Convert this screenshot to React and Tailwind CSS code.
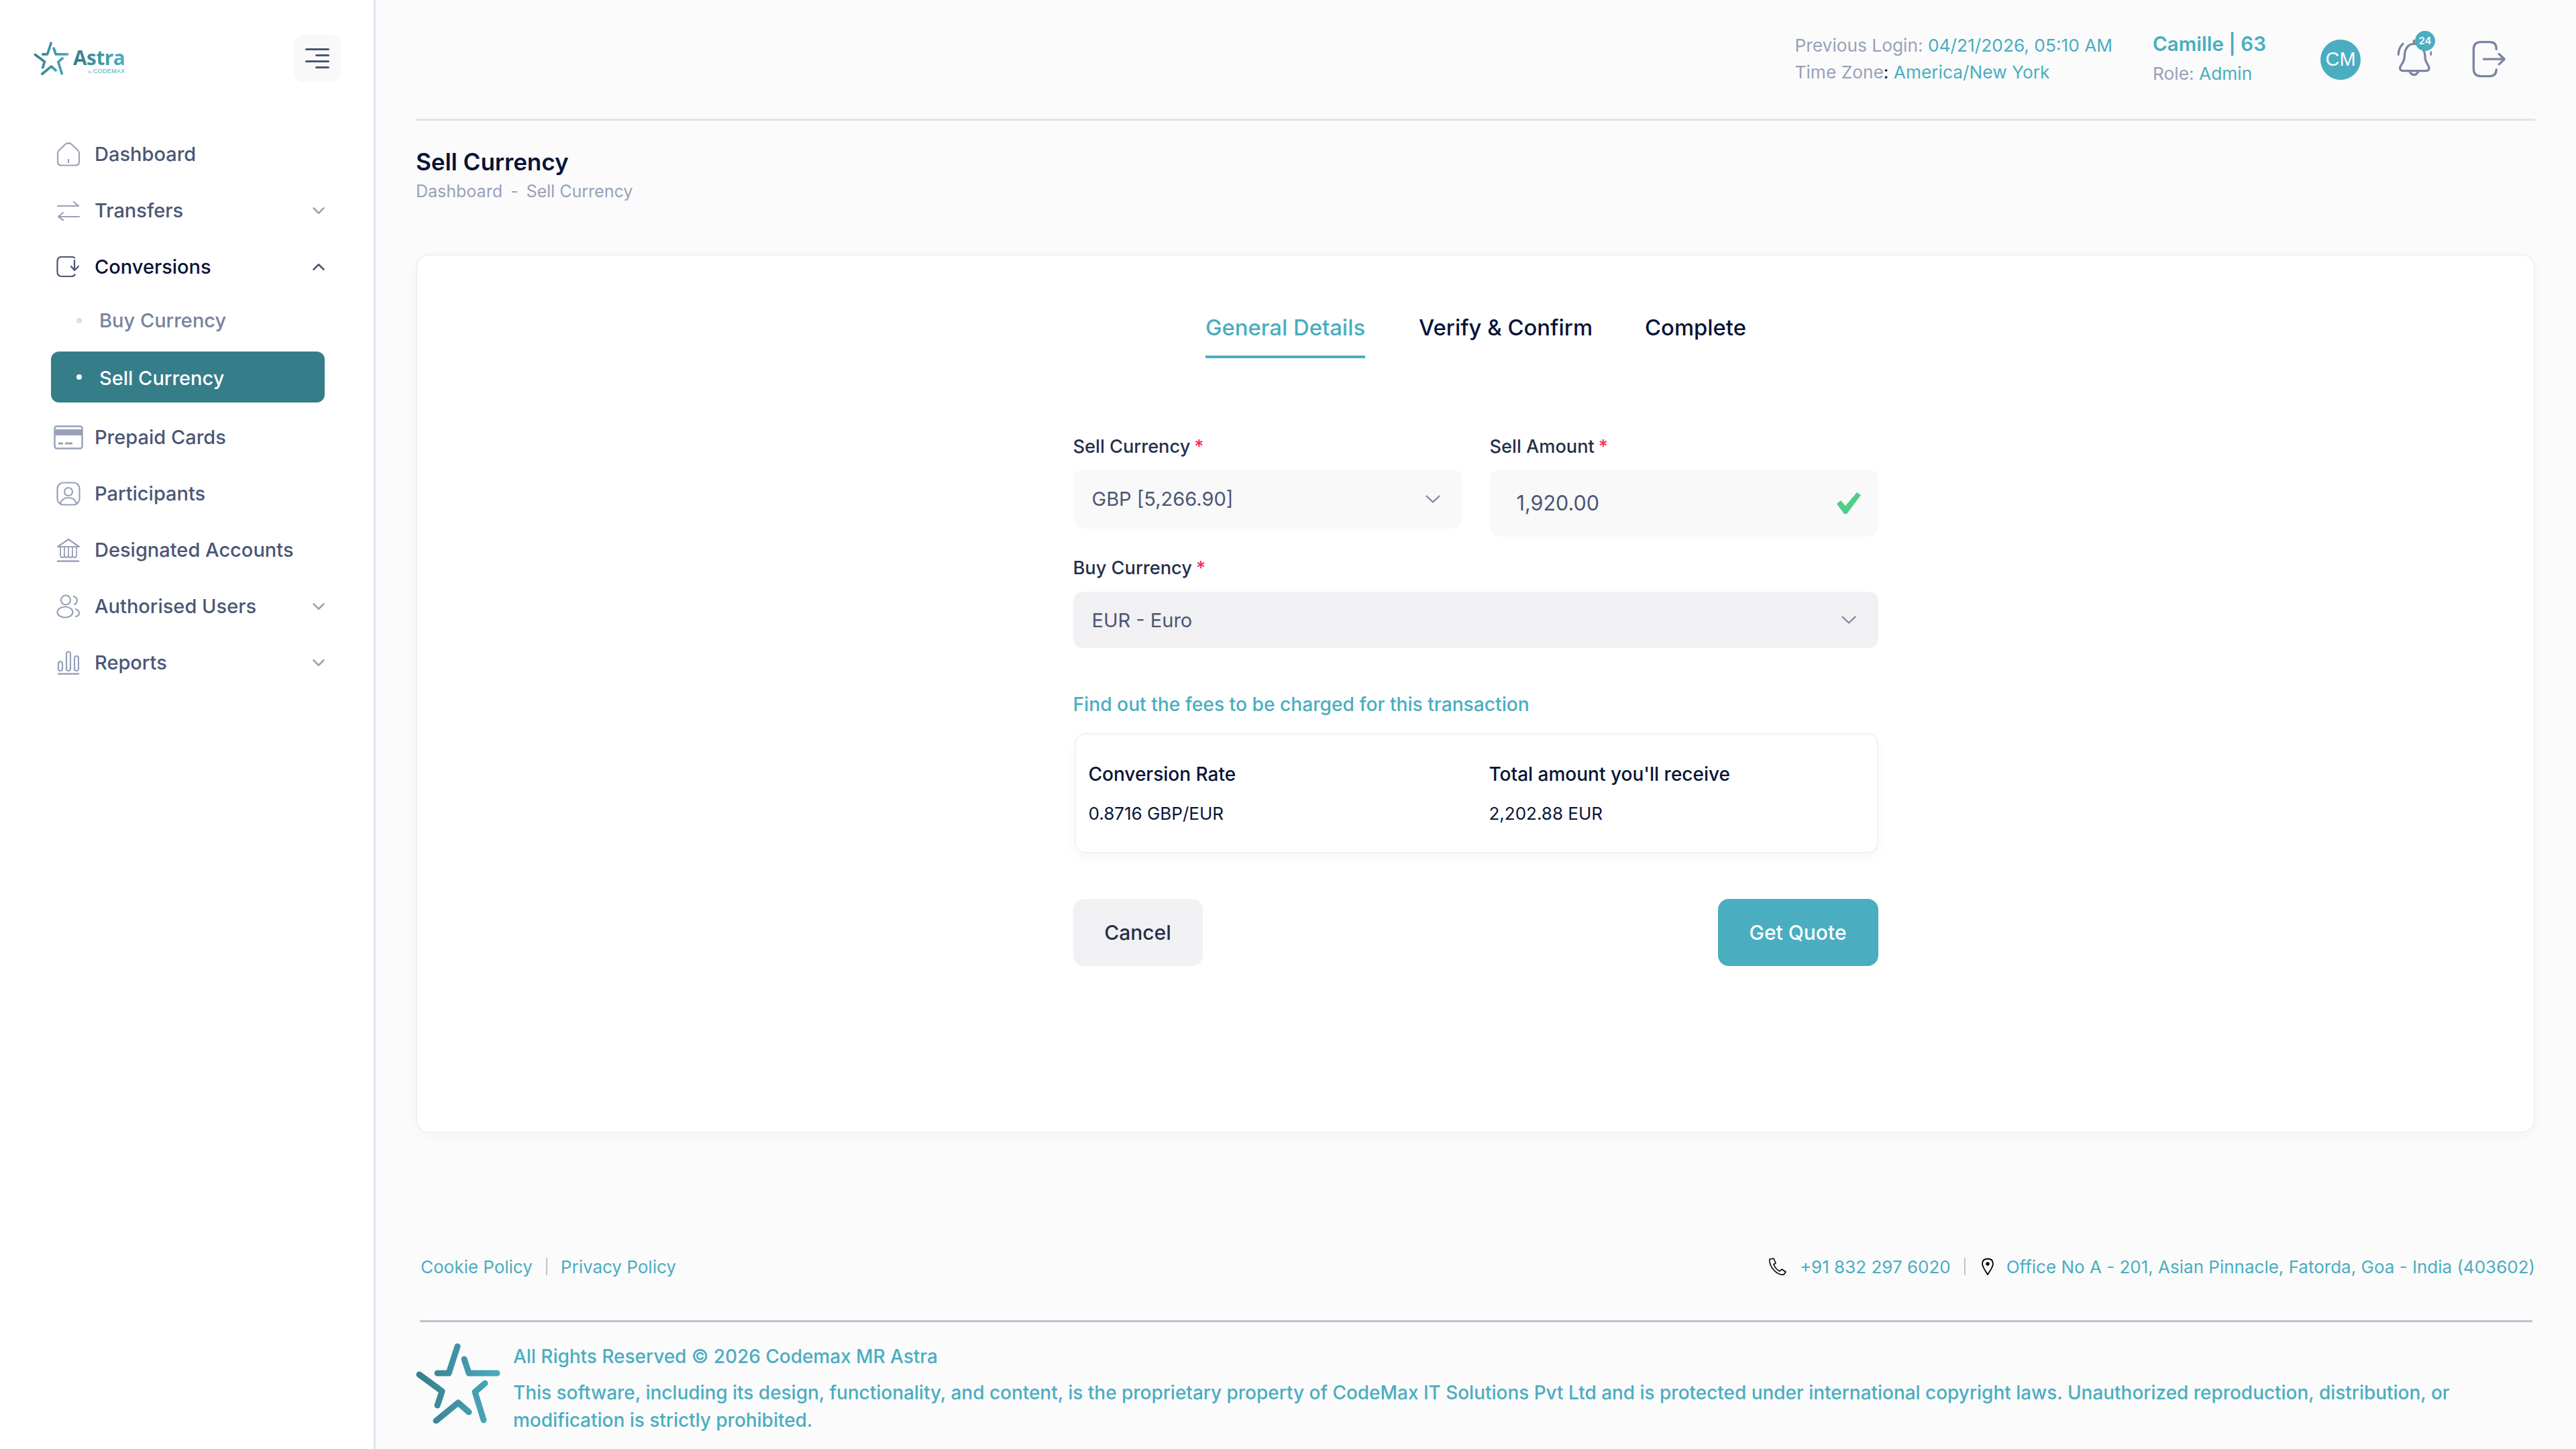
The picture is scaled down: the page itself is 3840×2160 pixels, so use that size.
import { ChevronDown, ChevronUp } from 'lucide-react';

const ICON = 'fill-none stroke-[#99a1b7] stroke-[2.2]';

const HomeIcon = () => (
  <svg viewBox="0 0 36 36" className={`w-[36px] h-[36px] ${ICON}`}>
    <path d="M2 16.5 Q2 13.5 4.5 11.5 L13.5 3 Q18 -0.5 22.5 3 L31.5 11.5 Q34 13.5 34 16.5 V29 Q34 34.500 28.500 34.500 H7.500 Q2 34.500 2 29 Z" />
    <path d="M18 25 V31" />
  </svg>
);

const TransferIcon = () => (
  <svg viewBox="0 0 36 30" className={`w-[36px] h-[30px] ${ICON}`} strokeLinecap="round" strokeLinejoin="round">
    <path d="M2 8 H33 M26 2 L33 8" />
    <path d="M34 24 H3 M10 18 L3 24 L10 29" />
  </svg>
);

const ConvertIcon = () => (
  <svg viewBox="0 0 36 32" className="w-[36px] h-[32px] fill-none stroke-[#4b5675] stroke-[2.2]" strokeLinecap="round" strokeLinejoin="round">
    <path d="M27 2.500 Q26 1 24 1 H8 Q1.500 1 1.500 8 V23 Q1.500 30 8 30 H22 Q27 30 27.500 27" />
    <path d="M27 6 V20 M22 15 L27 21 L33 15" />
  </svg>
);

const CardIcon = () => (
  <svg viewBox="0 0 44 36" className="w-[44px] h-[36px]">
    <rect x="1.500" y="1.500" width="41" height="33" rx="3" fill="none" stroke="#99a1b7" strokeWidth="2.500" />
    <rect x="2" y="6" width="40" height="9" fill="#99a1b7" />
    <path d="M7 27 H14 M17 27 H28" stroke="#99a1b7" strokeWidth="3" />
  </svg>
);

const ParticipantIcon = () => (
  <svg viewBox="0 0 36 36" className={`w-[36px] h-[36px] ${ICON}`}>
    <rect x="1.500" y="1.500" width="33" height="33" rx="9" />
    <circle cx="18" cy="15" r="6" />
    <path d="M6 33 Q8 24 18 24 Q28 24 30 33" />
  </svg>
);

const BankIcon = () => (
  <svg viewBox="0 0 36 36" className={`w-[36px] h-[36px] ${ICON}`} strokeLinecap="round" strokeLinejoin="round">
    <path d="M2 13 L18 2 L34 13 H2 Z" />
    <path d="M6 14 V26 Q6 29 9 29 Q12 29 12 26 V14 M12 26 Q12 29 15 29 Q18 29 18 26 V14 M18 26 Q18 29 21 29 Q24 29 24 26 V14 M24 26 Q24 29 27 29 Q30 29 30 26 V14" strokeWidth="1.800" />
    <path d="M2 34.500 H33" strokeWidth="2.500" />
  </svg>
);

const UsersIcon = () => (
  <svg viewBox="0 0 36 36" className={`w-[36px] h-[36px] ${ICON}`} strokeLinecap="round">
    <circle cx="14" cy="8.500" r="7" />
    <ellipse cx="13" cy="26.500" rx="11.500" ry="8" />
    <path d="M26 3 Q31 5 31 9 Q31 13 27 15" />
    <path d="M29 22 Q34 24 34 28 Q34 32 29 33" />
  </svg>
);

const BarsIcon = () => (
  <svg viewBox="0 0 36 36" className={`w-[36px] h-[36px] ${ICON}`} strokeLinecap="round">
    <rect x="3" y="16" width="6" height="14" rx="3" />
    <rect x="15" y="1.500" width="6" height="28.500" rx="3" />
    <rect x="27" y="8" width="6" height="22" rx="3" />
    <path d="M3 34.500 H33" strokeWidth="2.500" />
  </svg>
);

// the five strokes of the Astra star, shared by sidebar logo and footer
const Star = ({ id, className }) => (
  <svg viewBox="0 0 128 120" className={className} fill="none" strokeWidth="9" strokeLinecap="round" strokeLinejoin="round">
    <defs>
      <linearGradient id={id} x1="0" y1="0" x2="128" y2="0" gradientUnits="userSpaceOnUse">
        <stop offset="0" stopColor="#367d8a" />
        <stop offset="1" stopColor="#4aadc0" />
      </linearGradient>
    </defs>
    <g stroke={`url(#${id})`}>
      <path d="M63 5 L50 45 H33" />
      <path d="M73 24 L80 45 H122" />
      <path d="M6 47 L40 72 L33 93" />
      <path d="M104 60 L89 73 L102 115" />
      <path d="M31 116 L64 89 L80 103" />
    </g>
  </svg>
);

const NavRow = ({ icon, label, active, caret }) => (
  <div className="h-[84px] flex items-center">
    <div className="w-[52px] flex justify-center shrink-0">{icon}</div>
    <span className={`ml-[13px] text-[29px] font-medium flex-1 ${active ? 'text-[#071437]' : 'text-[#4b5675]'}`}>{label}</span>
    {caret === 'down' && <ChevronDown size={30} strokeWidth={2} className="text-[#99a1b7] mr-[-6px]" />}
    {caret === 'up' && <ChevronUp size={30} strokeWidth={2} className="text-[#4b5675] mr-[-6px]" />}
  </div>
);

function Sidebar() {
  return (
    <aside className="w-[560px] shrink-0 h-full bg-white border-r-[3px] border-[#e0e4f2]">
      <div className="flex justify-between items-start pt-[52px] pl-[50px] pr-[49px]">
        <div className="flex items-start pt-[10px]">
          <Star id="logoStar" className="w-[53px] h-[50px]" />
          <div className="ml-[6px] mt-[8px] flex flex-col items-end">
            <span className="font-['Open_Sans',sans-serif] font-bold text-[30px] leading-[31px] tracking-[-0.6px] bg-gradient-to-r from-[#367d8a] to-[#4aadc0] bg-clip-text text-transparent">Astra</span>
            <span className="font-['Liberation_Sans',sans-serif] text-[9px] leading-[9px] tracking-[0.3px] text-[#4aadc0] mt-[1px]"><span className="text-[5px]">by </span>CODEMAX</span>
          </div>
        </div>
        <button className="w-[70px] h-[70px] rounded-[14px] bg-[#f9f9f9] flex flex-col items-end justify-center gap-[6px] pr-[17px]">
          <span className="w-[36px] h-[3px] rounded bg-[#4b5675]" />
          <span className="w-[21px] h-[3px] rounded bg-[#4b5675]" />
          <span className="w-[36px] h-[3px] rounded bg-[#4b5675]" />
          <span className="w-[21px] h-[3px] rounded bg-[#4b5675]" />
        </button>
      </div>

      <nav className="mt-[66px] ml-[76px] w-[408px]">
        <NavRow icon={<HomeIcon />} label="Dashboard" />
        <NavRow icon={<TransferIcon />} label="Transfers" caret="down" />
        <NavRow icon={<ConvertIcon />} label="Conversions" active caret="up" />
        <div className="h-[76px] flex items-center pl-[38px]">
          <span className="w-[8px] h-[8px] rounded-full bg-[#dbdfe9]" />
          <span className="ml-[26px] text-[29px] font-medium text-[#78829d]">Buy Currency</span>
        </div>
        <div className="mt-[8px] mb-[10px] h-[76px] flex items-center pl-[38px] rounded-[12px] bg-[#367d8a]">
          <span className="w-[8px] h-[8px] rounded-full bg-white" />
          <span className="ml-[26px] pt-[3px] text-[29px] font-medium text-white">Sell Currency</span>
        </div>
        <NavRow icon={<CardIcon />} label="Prepaid Cards" />
        <NavRow icon={<ParticipantIcon />} label="Participants" />
        <NavRow icon={<BankIcon />} label="Designated Accounts" />
        <NavRow icon={<UsersIcon />} label="Authorised Users" caret="down" />
        <NavRow icon={<BarsIcon />} label="Reports" caret="down" />
      </nav>
    </aside>
  );
}

function Header() {
  return (
    <header className="h-[180px] border-b-[3px] border-[#dfe3ee] flex items-start justify-end pr-[42px]">
      <div className="pt-[48px] text-[26.3px] leading-[40px] text-[#99a1b7]">
        <div>Previous Login: <span className="text-[#4aadc0]">04/21/2026, 05:10 AM</span></div>
        <div>Time Zone<span className="text-[#071437]">:</span> <span className="text-[#4aadc0]">America/New York</span></div>
      </div>
      <div className="ml-[60px] pt-[44px] text-[#99a1b7]">
        <div className="text-[29.5px] leading-[42px] font-semibold text-[#4aadc0]">Camille | 63</div>
        <div className="text-[26.3px] leading-[40px] mt-[4px]">Role: <span className="text-[#4aadc0]">Admin</span></div>
      </div>
      <div className="ml-[81px] mt-[59px] w-[60px] h-[60px] rounded-full bg-[#4aadc0] text-white flex items-center justify-center font-['Liberation_Sans',sans-serif] text-[29px]">CM</div>
      <div className="relative ml-[53px] mt-[57px] w-[53px] h-[58px]">
        <svg viewBox="455 85 160 175" className="w-[53px] h-[58px] fill-none stroke-[#7c84a3] stroke-[10]" strokeLinecap="round" strokeLinejoin="round">
          <path d="M535 110 C505 110 492 138 492 170 C492 195 472 205 472 220 Q472 232 490 232 H585 Q603 232 603 220 C603 205 585 195 585 170 C585 138 565 110 535 110 Z" />
          <path d="M517 238 Q535 262 553 238" />
          <path d="M485 110 Q465 130 465 158" />
          <path d="M535 95 V108" />
          <path d="M612 148 V158" />
        </svg>
        <span className="absolute left-[28px] top-[-11px] w-[30px] h-[30px] rounded-full bg-[#4aadc0] text-white text-[15px] font-semibold flex items-center justify-center">24</span>
      </div>
      <svg viewBox="795 95 155 170" className="ml-[60px] mt-[60px] w-[52px] h-[57px] fill-none stroke-[#7c84a3] stroke-[10]" strokeLinecap="round" strokeLinejoin="round">
        <path d="M903 135 V132 Q903 103 873 103 H835 Q802 103 802 135 V222 Q802 255 835 255 H873 Q903 255 903 225" />
        <path d="M847 179 H939 M915 156 L939 179 L915 202" />
      </svg>
    </header>
  );
}

const Req = () => <span className="text-[#f8285a] ml-[6px]">*</span>;

const Chevron = () => (
  <svg viewBox="0 0 22 12" className="w-[22px] h-[12px] fill-none stroke-[#78829d] stroke-[2.2]" strokeLinecap="round" strokeLinejoin="round">
    <path d="M1.500 1.500 L11 10.500 L20.500 1.500" />
  </svg>
);

function SellForm() {
  return (
    <div className="w-[1200px] mx-auto">
      <div className="grid grid-cols-[580px_579px] gap-x-[41px] items-start mt-[114px]">
        <div>
          <label className="block text-[27.2px] leading-[36px] font-medium text-[#252f4a] mb-[16px]">Sell Currency<Req /></label>
          <div className="h-[88px] rounded-[14px] bg-[#f9f9f9] flex items-center justify-between pl-[28px] pr-[33px] text-[29px] text-[#4b5675]">
            <span>GBP [5,266.90]</span>
            <Chevron />
          </div>
        </div>
        <div>
          <label className="block text-[27.2px] leading-[36px] font-medium text-[#252f4a] mb-[16px]">Sell Amount<Req /></label>
          <div className="h-[100px] rounded-[14px] bg-[#f9f9f9] flex items-center justify-between pl-[40px] pr-[26px] text-[30.5px] text-[#4b5675]">
            <span>1,920.00</span>
            <svg viewBox="0 0 36 32" className="w-[36px] h-[32px] fill-[#50cd89]">
              <path d="M0 17 L6 12 L13 20 L30 0 L36 4 L15 32 H11 Z" />
            </svg>
          </div>
        </div>
      </div>
      <label className="block mt-[29px] mb-[17px] text-[27.2px] leading-[36px] font-medium text-[#252f4a]">Buy Currency<Req /></label>
      <div className="h-[84px] rounded-[14px] bg-[#f1f1f4] flex items-center justify-between pl-[28px] pr-[33px] text-[29px] text-[#4b5675]">
        <span className="pt-[2px]">EUR - Euro</span>
        <Chevron />
      </div>
      <div className="mt-[64px] text-[28.2px] leading-[40px] font-medium text-[#4aadc0]">Find out the fees to be charged for this transaction</div>
      <div className="mt-[23px] h-[179px] ml-[2px] rounded-[16px] bg-white border-[2px] border-[#f1f1f4] shadow-[0_8px_20px_rgba(0,0,0,0.03)] grid grid-cols-[597px_1fr] pl-[19px] pt-[39px] text-[#071437]">
        <div>
          <div className="text-[28px] leading-[40px] font-medium">Conversion Rate</div>
          <div className="mt-[19px] text-[26px] leading-[40px]">0.8716 GBP/EUR</div>
        </div>
        <div>
          <div className="text-[28px] leading-[40px] font-medium">Total amount you'll receive</div>
          <div className="mt-[19px] text-[26px] leading-[40px]">2,202.88 EUR</div>
        </div>
      </div>
      <div className="mt-[68px] flex justify-between">
        <button className="w-[193px] h-[100px] rounded-[16px] bg-[#f1f1f4] text-[30px] font-medium text-[#252f4a]">Cancel</button>
        <button className="w-[239px] h-[100px] rounded-[16px] bg-[#4aadc0] text-[30px] font-medium text-white">Get Quote</button>
      </div>
    </div>
  );
}

function Footer() {
  return (
    <footer className="mt-[179px] text-[#4aadc0]">
      <div className="flex items-center justify-between pl-[7px] h-[40px] text-[26px]">
        <div className="flex items-center">
          <span>Cookie Policy</span>
          <span className="w-[2px] h-[26px] bg-[#c4c4c4] mx-[20px]" />
          <span>Privacy Policy</span>
        </div>
        <div className="flex items-center">
          <svg viewBox="0 0 29 26" className="w-[29px] h-[26px] fill-none stroke-black stroke-[1.6] mr-[19px]" strokeLinejoin="round">
            <path d="M3 2 L9 1 L12 8 L9 10 Q12 17 18 20 L21 17 L27 21 L24 25 Q16 26 9 18 Q2 10 3 2 Z" />
          </svg>
          <span>+91 832 297 6020</span>
          <span className="w-[2px] h-[26px] bg-[#c4c4c4] ml-[20px] mr-[23px]" />
          <svg viewBox="0 0 20 26" className="w-[20px] h-[26px] fill-none stroke-black stroke-[1.8] mr-[18px]" strokeLinejoin="round">
            <path d="M10 25 Q2 13 2 9 Q2 1.500 10 1.500 Q18 1.500 18 9 Q18 13 10 25 Z" />
            <circle cx="10" cy="9" r="1.800" className="fill-black" />
          </svg>
          <span>Office No A - 201, Asian Pinnacle, Fatorda, Goa - India (403602)</span>
        </div>
      </div>
      <div className="mt-[60px] ml-[6px] mr-[4px] h-[3px] bg-[#bcc0cd]" />
      <div className="mt-[31px] flex items-start -ml-[1px]">
        <Star id="footerStar" className="w-[128px] h-[120px] shrink-0" />
        <div className="ml-[18px] text-[27.95px] font-medium">
          <div className="leading-[40px]">All Rights Reserved © 2026 Codemax MR Astra</div>
          <p className="mt-[14px] leading-[41px]">This software, including its design, functionality, and content, is the proprietary property of CodeMax IT Solutions Pvt Ltd and is protected under international copyright laws. Unauthorized reproduction, distribution, or modification is strictly prohibited.</p>
        </div>
      </div>
    </footer>
  );
}

export default function App() {
  return (
    <div className="w-[3840px] h-[2160px] overflow-hidden flex bg-[#fbfbfc] font-[Inter,sans-serif]">
      <Sidebar />
      <main className="flex-1 pl-[60px] pr-[61px]">
        <Header />
        <h1 className="mt-[37px] text-[35px] leading-[48px] font-semibold text-[#071437]">Sell Currency</h1>
        <div className="mt-[2px] flex items-center text-[25px] leading-[36px] text-[#99a1b7]">
          <span>Dashboard</span>
          <span className="mx-[12px]">-</span>
          <span>Sell Currency</span>
        </div>
        <section className="mt-[76px] h-[1310px] rounded-[20px] bg-white border-[2px] border-[#f1f1f4] shadow-[0_4px_20px_rgba(0,0,0,0.03)]">
          <div className="flex justify-center pl-[1px] pt-[83px] text-[32.8px] font-medium">
            <div className="leading-[48px] pb-[18px] border-b-[4px] border-[#4aadc0] text-[#4aadc0]">General Details</div>
            <div className="ml-[80px] leading-[48px] text-[#071437]">Verify &amp; Confirm</div>
            <div className="ml-[78px] leading-[48px] text-[#071437]">Complete</div>
          </div>
          <SellForm />
        </section>
        <Footer />
      </main>
    </div>
  );
}
